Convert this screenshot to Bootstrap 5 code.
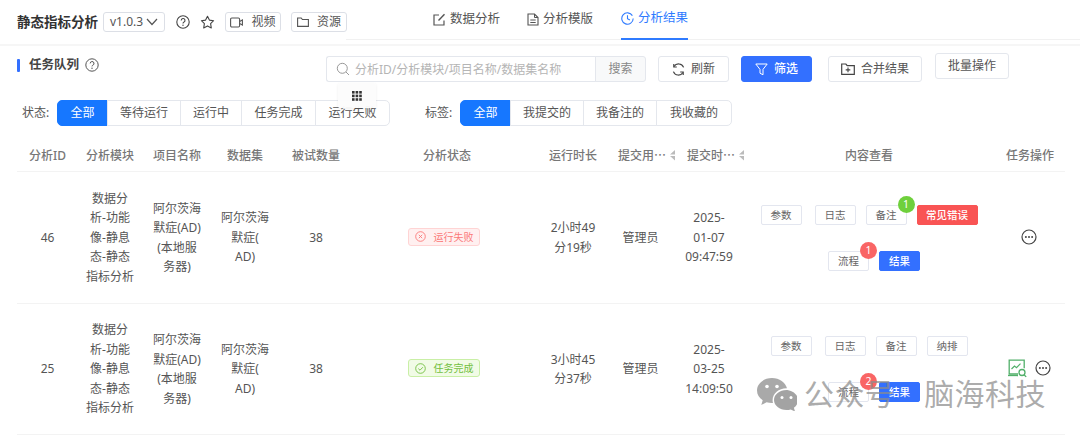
<!DOCTYPE html>
<html lang="zh-CN">
<head>
    <meta charset="UTF-8">
    <title>分析结果</title>
    <link href="https://cdn.jsdelivr.net/npm/bootstrap@5.3.0/dist/css/bootstrap.min.css" rel="stylesheet">
    <style>
        html, body { height: 439px; overflow: hidden; }
        body { font-family: "Noto Sans", "Noto Sans CJK SC", sans-serif; font-size: 12px; color: #555; background: #fff; position: relative; }
        .top-bar { height: 46px; border-bottom: 2px solid #f6f6f6; }
        .top-left { width: 346px; flex: none; padding-left: 17px; height: 44px; }
        .top-left > * { flex: none; }
        .app-title { font-size: 13.5px; font-weight: 700; color: #333; width: 86px; white-space: nowrap; }
        .ver-select { width: 62px; height: 20px; border: 1px solid #dcdfe6; border-radius: 3px; color: #555; padding: 0 6px 0 6px; font-size: 12px; }
        .help-top { margin-left: 11px; }
        .star-top { margin-left: 10px; }
        .small-btn { height: 20px; border: 1px solid #dcdfe6; border-radius: 3px; color: #555; font-size: 12px; padding: 0; width: 56px; gap: 8px; background: #fff; margin-left: 10px; }
        .tab-strip { height: 40px; border-bottom: 1px solid #f1f1f1; flex: 1; padding-left: 87px; gap: 27px; align-self: flex-start; }
        .tab-item { height: 40px; width: 67px; color: #555; font-size: 12.5px; gap: 4px; white-space: nowrap; padding-bottom: 1px; }
        .tab-active { color: #2f7bff; border-bottom: 2px solid #2f7bff; }
        .tool-row { height: 44px; padding: 10px 71px 0 17px; }
        .tool-row > * { flex: none; }
        .queue-head { height: 26px; margin-top: -4px; white-space: nowrap; }
        .queue-mark { width: 3px; height: 13px; background: #3370ff; border-radius: 1px; margin-right: 9px; }
        .queue-title { font-size: 12.5px; font-weight: 700; color: #444; margin-right: 6px; }
        .search-box { width: 320px; height: 26px; flex-wrap: nowrap; margin-right: 12px; margin-left: auto; }
        .search-box .input-group-text { background: #fff; border: 1px solid #e4e7ed; border-right: 0; padding: 0 6px 0 9px; border-radius: 3px 0 0 3px; }
        .search-box .form-control { border: 1px solid #e4e7ed; border-left: 0; border-radius: 0; font-size: 12px; padding: 0; height: 26px; box-shadow: none; font-family: inherit; }
        .search-box .form-control::placeholder { color: #b5b5b5; }
        .search-box .btn { width: 51px; flex: none; height: 26px; padding: 0; font-size: 12px; color: #888; background: #f8f9fa; border: 1px solid #e4e7ed; border-radius: 0 3px 3px 0; margin-left: -1px; }
        .tool-btn { height: 26px; padding: 0; font-size: 12px; color: #555; background: #fff; border: 1px solid #e4e7ed; border-radius: 3px; gap: 6px; }
        .btn-refresh { width: 71px; margin-right: 12px; }
        .btn-filter { width: 71px; margin-right: 16px; background: #3370ff; border-color: #3370ff; color: #fff; font-weight: 500; }
        .btn-merge { width: 94px; margin-right: 13px; }
        .btn-batch { width: 74px; margin-top: -3px; }
        .filter-row { height: 50px; padding: 10px 0 0 22px; align-items: flex-start; }
        .filter-label { width: 35px; line-height: 26px; color: #555; flex: none; }
        .filter-label-tag { margin-left: 35px; }
        .seg-group .btn { height: 26px; padding: 0; font-size: 12px; color: #555; border: 1px solid #e4e7ed; background: #fff; border-radius: 0; margin-left: -1px; white-space: nowrap; }
        .seg-group .btn:first-child { margin-left: 0; border-radius: 5px 0 0 5px; }
        .seg-group .btn:last-child { border-radius: 0 5px 5px 0; }
        .seg-group .seg-on { background: #1677ff; border-color: #1677ff; color: #fff; }
        .w50 { width: 51px; }
        .w61 { width: 62px; }
        .w73 { width: 74px; }
        .w75 { width: 75px; }
        .w76 { width: 76px; }
        .float-tool { position: absolute; left: 338px; top: 83px; width: 38px; height: 25px; background: rgba(252, 252, 252, .96); box-shadow: 0 1px 3px rgba(0, 0, 0, .07); border-radius: 2px; }
        .task-table { table-layout: fixed; width: 1048px; margin: 0 0 0 17px; border-collapse: collapse; }
        .task-table th, .task-table td { text-align: center; vertical-align: middle; padding: 0; border: 0; border-bottom: 1px solid #f3f3f3; color: #555; background: transparent; font-size: 12px; line-height: 19.5px; box-shadow: none; }
        .task-table th { height: 31px; font-weight: 500; color: #777; white-space: nowrap; }
        .task-table td { height: 132px; padding-top: 1px; }
        .task-table tr.row-two td { height: 131px; }
        .task-table th.th-sort { padding-left: 12px; }
        .c-id { width: 61px; } .c-mod { width: 64px; } .c-proj { width: 70px; } .c-set { width: 66px; }
        .c-num { width: 76px; } .c-state { width: 186px; } .c-time { width: 66px; } .c-user { width: 69px; }
        .c-date { width: 68px; } .c-view { width: 252px; } .c-op { width: 70px; }
        .sort-mark { margin-left: 4px; vertical-align: -1px; }
        .state-tag { height: 18px; width: 72px; border-radius: 3px; font-size: 10px; gap: 8px; line-height: 16px; margin-right: 6px; }
        .state-bad { background: #fff0f0; border: 1px solid #ffd4d4; color: #fb7878; }
        .state-ok { background: #f1fbe6; border: 1px solid #c9efa6; color: #72c040; }
        .view-rows { row-gap: 26px; width: 240px; margin: 0 auto; }
        .view-line { column-gap: 10px; }
        .view-line-low { margin-left: 10px; }
        .view-btn { height: 20px; width: 41px; padding: 0; font-size: 10.5px; line-height: 18px; color: #666; border: 1px solid #e3e6ef; border-radius: 2px; background: #fff; position: relative; }
        .view-first { margin-right: 3px; }
        .view-red { width: 61px; background: #f95454; border-color: #f95454; color: #fff; font-weight: 500; }
        .view-blue { background: #3370ff; border-color: #3370ff; color: #fff; font-weight: 500; }
        .count-dot { position: absolute; right: -9px; top: -10px; width: 17px; height: 17px; border-radius: 50%; color: #fff; font-size: 10.5px; line-height: 17px; text-align: center; }
        .dot-green { background: #6fd03c; }
        .dot-red { background: #f96565; }
        .op-icons { margin: 0 2px 2px 0; }
        .water-mark { position: absolute; left: 757px; top: 375px; gap: 7px; color: rgba(140, 140, 140, .72); font-size: 30px; line-height: 38px; white-space: nowrap; pointer-events: none; letter-spacing: .4px; }
        .water-gap { margin-left: 29px; }
    </style>
</head>
<body>
<div class="top-bar d-flex align-items-start">
    <div class="top-left d-flex align-items-center">
        <div class="app-title">静态指标分析</div>
        <div class="ver-select d-flex align-items-center justify-content-between">v1.0.3
            <svg width="12" height="8" viewBox="0 0 12 8"><path d="M1 1l5 5.500L11 1" fill="none" stroke="#555" stroke-width="1.200"/></svg>
        </div>
        <svg class="help-top" width="14" height="14" viewBox="0 0 14 14"><circle cx="7" cy="7" r="6.200" fill="none" stroke="#444" stroke-width="1.100"/><path d="M5.200 5.400a1.900 1.900 0 1 1 2.600 1.800c-.6.300-.8.600-.8 1.200" fill="none" stroke="#444" stroke-width="1.100"/><circle cx="7" cy="10.200" r=".7" fill="#444"/></svg>
        <svg class="star-top" width="15" height="14" viewBox="0 0 15 14"><path d="M7.500 1.200l1.900 3.900 4.200.6-3 3 .7 4.200-3.800-2-3.800 2 .7-4.200-3-3 4.200-.6z" fill="none" stroke="#444" stroke-width="1.100" stroke-linejoin="round"/></svg>
        <button type="button" class="small-btn d-flex align-items-center justify-content-center">
            <svg width="13" height="11" viewBox="0 0 13 11"><rect x=".6" y="1" width="9" height="9" rx="1.200" fill="none" stroke="#555" stroke-width="1.100"/><path d="M9.600 4.400l2.800-1.400v5L9.600 6.600" fill="none" stroke="#555" stroke-width="1.100"/></svg>视频
        </button>
        <button type="button" class="small-btn d-flex align-items-center justify-content-center">
            <svg width="12" height="10" viewBox="0 0 12 10"><path d="M.6 1h3.600l1.200 1.500h6v6.900H.6z" fill="none" stroke="#555" stroke-width="1.100"/></svg>资源
        </button>
    </div>
    <div class="tab-strip d-flex">
        <div class="tab-item d-flex align-items-center">
            <svg width="13" height="13" viewBox="0 0 13 13"><path d="M11 7.500V12H1V2h5" fill="none" stroke="#555" stroke-width="1.200"/><path d="M5.500 7.500L11.500 1.200" fill="none" stroke="#555" stroke-width="1.400"/></svg>数据分析
        </div>
        <div class="tab-item d-flex align-items-center">
            <svg width="12" height="13" viewBox="0 0 12 13"><path d="M1 1h6.500L11 4.500V12H1z" fill="none" stroke="#555" stroke-width="1.100"/><path d="M7.500 1v3.500H11M3.300 7h5.400M3.300 9.500h5.400" fill="none" stroke="#555" stroke-width="1"/></svg>分析模版
        </div>
        <div class="tab-item tab-active d-flex align-items-center">
            <svg width="13" height="13" viewBox="0 0 13 13"><path d="M11.400 3.600A5.700 5.700 0 1 0 12.200 6.500" fill="none" stroke="#2f7bff" stroke-width="1.100"/><path d="M6.500 3.200v3.500l2.400 1.400" fill="none" stroke="#2f7bff" stroke-width="1.100"/></svg>分析结果
        </div>
    </div>
</div>

<div class="tool-row d-flex align-items-start">
    <div class="queue-head d-flex align-items-center">
        <span class="queue-mark"></span><span class="queue-title">任务队列</span>
        <svg width="14" height="14" viewBox="0 0 14 14"><circle cx="7" cy="7" r="6.200" fill="none" stroke="#555" stroke-width="1"/><path d="M5.200 5.400a1.900 1.900 0 1 1 2.600 1.800c-.6.300-.8.600-.8 1.200" fill="none" stroke="#555" stroke-width="1"/><circle cx="7" cy="10.200" r=".7" fill="#555"/></svg>
    </div>
    <div class="input-group search-box">
        <span class="input-group-text">
            <svg width="14" height="14" viewBox="0 0 14 14"><circle cx="6.300" cy="6.300" r="5" fill="none" stroke="#999" stroke-width="1"/><path d="M10 10l3 3" stroke="#999" stroke-width="1"/></svg>
        </span>
        <input type="text" class="form-control" placeholder="分析ID/分析模块/项目名称/数据集名称">
        <button type="button" class="btn">搜索</button>
    </div>
    <button type="button" class="btn tool-btn btn-refresh d-flex align-items-center justify-content-center">
        <svg width="13" height="13" viewBox="0 0 13 13"><path d="M11.600 4.400A5.400 5.400 0 0 0 2 3.500M1.400 8.600A5.400 5.400 0 0 0 11 9.500" fill="none" stroke="#444" stroke-width="1.200"/><path d="M1.800 1v3h3M11.200 12V9h-3" fill="none" stroke="#444" stroke-width="1.200"/></svg>刷新
    </button>
    <button type="button" class="btn tool-btn btn-filter d-flex align-items-center justify-content-center">
        <svg width="13" height="13" viewBox="0 0 13 13"><path d="M.8 1h11.400L8 6.400v5.400L5 10.200V6.400z" fill="none" stroke="#fff" stroke-width="1" stroke-linejoin="round"/></svg>筛选
    </button>
    <button type="button" class="btn tool-btn btn-merge d-flex align-items-center justify-content-center">
        <svg width="14" height="12" viewBox="0 0 14 12"><path d="M.7 1h4.200l1.300 1.600h7.100v8.700H.7z" fill="none" stroke="#444" stroke-width="1.200"/><path d="M7 4.600v4.600M4.700 6.900h4.600" stroke="#444" stroke-width="1.100"/></svg>合并结果
    </button>
    <button type="button" class="btn tool-btn btn-batch">批量操作</button>
</div>

<div class="filter-row d-flex">
    <div class="filter-label">状态:</div>
    <div class="seg-group d-flex">
        <button type="button" class="btn w50 seg-on">全部</button>
        <button type="button" class="btn w73">等待运行</button>
        <button type="button" class="btn w61">运行中</button>
        <button type="button" class="btn w75">任务完成</button>
        <button type="button" class="btn w75">运行失败</button>
    </div>
    <div class="filter-label filter-label-tag">标签:</div>
    <div class="seg-group d-flex">
        <button type="button" class="btn w50 seg-on">全部</button>
        <button type="button" class="btn w73">我提交的</button>
        <button type="button" class="btn w73">我备注的</button>
        <button type="button" class="btn w76">我收藏的</button>
    </div>
</div>

<div class="float-tool d-flex align-items-center justify-content-center">
    <svg width="10" height="10" viewBox="0 0 10 10" fill="#333"><rect width="2.600" height="2.600"/><rect x="3.600" width="2.600" height="2.600"/><rect x="7.200" width="2.600" height="2.600"/><rect y="3.600" width="2.600" height="2.600"/><rect x="3.600" y="3.600" width="2.600" height="2.600"/><rect x="7.200" y="3.600" width="2.600" height="2.600"/><rect y="7.200" width="2.600" height="2.600"/><rect x="3.600" y="7.200" width="2.600" height="2.600"/><rect x="7.200" y="7.200" width="2.600" height="2.600"/></svg>
</div>

<table class="table task-table">
    <colgroup>
        <col class="c-id"><col class="c-mod"><col class="c-proj"><col class="c-set"><col class="c-num"><col class="c-state"><col class="c-time"><col class="c-user"><col class="c-date"><col class="c-view"><col class="c-op">
    </colgroup>
    <thead>
    <tr>
        <th>分析ID</th><th>分析模块</th><th>项目名称</th><th>数据集</th><th>被试数量</th><th>分析状态</th><th>运行时长</th>
        <th class="th-sort">提交用⋯<svg class="sort-mark" width="5" height="11" viewBox="0 0 5 11" fill="#bbb"><path d="M5 0v4.500L0 4.500zM5 6v4.500L0 6z"/></svg></th>
        <th class="th-sort">提交时⋯<svg class="sort-mark" width="5" height="11" viewBox="0 0 5 11" fill="#bbb"><path d="M5 0v4.500L0 4.500zM5 6v4.500L0 6z"/></svg></th>
        <th>内容查看</th><th>任务操作</th>
    </tr>
    </thead>
    <tbody>
    <tr>
        <td>46</td>
        <td>数据分<br>析-功能<br>像-静息<br>态-静态<br>指标分析</td>
        <td>阿尔茨海<br>默症(AD)<br>(本地服<br>务器)</td>
        <td>阿尔茨海<br>默症(<br>AD)</td>
        <td>38</td>
        <td>
            <span class="state-tag state-bad d-inline-flex align-items-center justify-content-center">
                <svg width="11" height="11" viewBox="0 0 11 11"><circle cx="5.500" cy="5.500" r="4.800" fill="none" stroke="#fb7878" stroke-width=".9"/><path d="M3.800 3.800l3.400 3.400M7.200 3.800L3.800 7.200" stroke="#fb7878" stroke-width=".9"/></svg>运行失败
            </span>
        </td>
        <td>2小时49<br>分19秒</td>
        <td>管理员</td>
        <td>2025-<br>01-07<br>09:47:59</td>
        <td>
            <div class="view-rows d-flex flex-wrap justify-content-center">
                <div class="w-100 d-flex justify-content-center view-line">
                    <button type="button" class="view-btn view-first">参数</button>
                    <button type="button" class="view-btn">日志</button>
                    <button type="button" class="view-btn">备注<span class="count-dot dot-green">1</span></button>
                    <button type="button" class="view-btn view-red">常见错误</button>
                </div>
                <div class="w-100 d-flex justify-content-center view-line view-line-low">
                    <button type="button" class="view-btn">流程<span class="count-dot dot-red">1</span></button>
                    <button type="button" class="view-btn view-blue">结果</button>
                </div>
            </div>
        </td>
        <td>
            <div class="op-icons d-flex align-items-center justify-content-center">
                <svg width="16" height="16" viewBox="0 0 16 16"><circle cx="8" cy="8" r="7" fill="none" stroke="#444" stroke-width="1.200"/><circle cx="4.900" cy="8" r="1" fill="#444"/><circle cx="8" cy="8" r="1" fill="#444"/><circle cx="11.100" cy="8" r="1" fill="#444"/></svg>
            </div>
        </td>
    </tr>
    <tr class="row-two">
        <td>25</td>
        <td>数据分<br>析-功能<br>像-静息<br>态-静态<br>指标分析</td>
        <td>阿尔茨海<br>默症(AD)<br>(本地服<br>务器)</td>
        <td>阿尔茨海<br>默症(<br>AD)</td>
        <td>38</td>
        <td>
            <span class="state-tag state-ok d-inline-flex align-items-center justify-content-center">
                <svg width="11" height="11" viewBox="0 0 11 11"><circle cx="5.500" cy="5.500" r="4.800" fill="none" stroke="#72c040" stroke-width=".9"/><path d="M3.300 5.600l1.700 1.600 2.900-3" fill="none" stroke="#72c040" stroke-width=".9"/></svg>任务完成
            </span>
        </td>
        <td>3小时45<br>分37秒</td>
        <td>管理员</td>
        <td>2025-<br>03-25<br>14:09:50</td>
        <td>
            <div class="view-rows d-flex flex-wrap justify-content-center">
                <div class="w-100 d-flex justify-content-center view-line">
                    <button type="button" class="view-btn view-first">参数</button>
                    <button type="button" class="view-btn">日志</button>
                    <button type="button" class="view-btn">备注</button>
                    <button type="button" class="view-btn">纳排</button>
                </div>
                <div class="w-100 d-flex justify-content-center view-line view-line-low">
                    <button type="button" class="view-btn">流程<span class="count-dot dot-red">2</span></button>
                    <button type="button" class="view-btn view-blue">结果</button>
                </div>
            </div>
        </td>
        <td>
            <div class="op-icons d-flex align-items-center justify-content-center gap-2">
                <svg width="19" height="19" viewBox="0 0 19 19"><path d="M10 15H1.200V1.200h15v8" fill="none" stroke="#52b06a" stroke-width="1.300"/><path d="M3.500 10l3-3 2 1.600 4-4" fill="none" stroke="#52b06a" stroke-width="1.200"/><path d="M0 16.500h10" stroke="#52b06a" stroke-width="1.300"/><circle cx="14" cy="13.500" r="3" fill="#fff" stroke="#52b06a" stroke-width="1.300"/><path d="M16 15.700l2.200 2.200" stroke="#52b06a" stroke-width="1.300"/></svg>
                <svg width="16" height="16" viewBox="0 0 16 16"><circle cx="8" cy="8" r="7" fill="none" stroke="#444" stroke-width="1.200"/><circle cx="4.900" cy="8" r="1" fill="#444"/><circle cx="8" cy="8" r="1" fill="#444"/><circle cx="11.100" cy="8" r="1" fill="#444"/></svg>
            </div>
        </td>
    </tr>
    </tbody>
</table>

<div class="water-mark d-flex align-items-center">
    <svg width="40" height="33" viewBox="0 0 40 33"><path d="M15 0C6.700 0 0 5.600 0 12.500c0 4 2.200 7.500 5.700 9.800L4.300 27l5.300-2.800c1.600.5 3.400.8 5.400.8h1a10.500 10.500 0 0 1-.4-2.800c0-6.600 6.200-11.900 13.800-11.900h.6C28.500 4.300 22.400 0 15 0z" fill="rgba(140,140,140,.75)"/><circle cx="10" cy="8.500" r="1.800" fill="#fff"/><circle cx="20" cy="8.500" r="1.800" fill="#fff"/><path d="M29.500 12C22.600 12 17 16.500 17 22s5.600 10 12.500 10c1.500 0 2.900-.2 4.200-.6l4.300 2.100-1.100-3.700c2.500-1.800 4.100-4.600 4.100-7.800 0-5.500-5.600-10-12.500-10z" fill="rgba(140,140,140,.8)"/><circle cx="25" cy="19.500" r="1.500" fill="#fff"/><circle cx="34" cy="19.500" r="1.500" fill="#fff"/></svg>
    <span>公众号<span class="water-gap">脑海科技</span></span>
</div>
</body>
</html>
